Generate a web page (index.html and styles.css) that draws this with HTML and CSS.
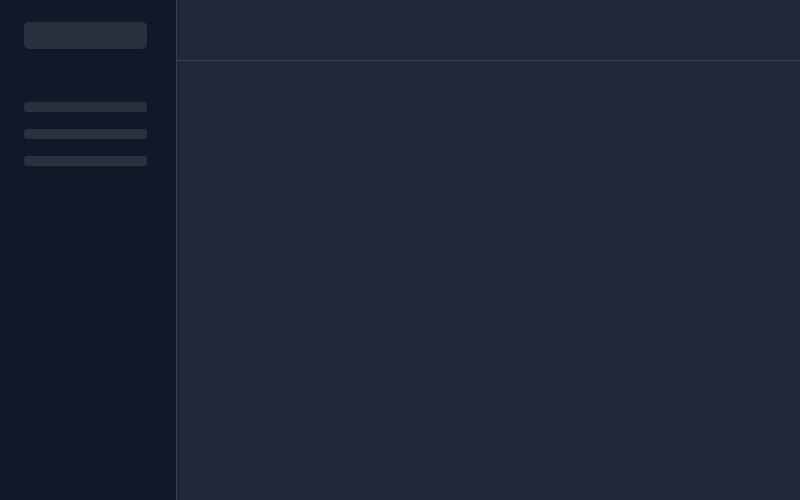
FILE: index.html
```html
<!DOCTYPE html>
<html>
<head>
<meta charset="utf-8">
<link rel="stylesheet" href="styles.css">
</head>
<body>
<div class="app">
  <aside class="sidebar">
    <div class="logo"></div>
    <nav class="nav">
      <div class="nav-item"></div>
      <div class="nav-item"></div>
      <div class="nav-item"></div>
    </nav>
  </aside>
  <main class="main">
    <header class="header"></header>
    <section class="content"></section>
  </main>
</div>
</body>
</html>
```
FILE: styles.css
```css
html, body {
  margin: 0;
  padding: 0;
  height: 100%;
  font-family: "Inter", "Liberation Sans", sans-serif;
  background: #1f2937;
}
.app {
  display: flex;
  height: 500px;
  width: 800px;
}
.sidebar {
  flex: none;
  background: #111827;
  border-right: 1px solid #374151;
  padding: 22px 24px;
  box-sizing: content-box;
  width: 128px;
  display: flex;
  flex-direction: column;
}
.logo {
  width: 123px;
  height: 27px;
  border-radius: 5px;
  background: #2a303d;
}
.nav {
  margin-top: 53px;
  display: flex;
  flex-direction: column;
  gap: 17px;
}
.nav-item {
  width: 123px;
  height: 10px;
  border-radius: 3px;
  background: #2a303d;
}
.main {
  flex: 1;
  display: flex;
  flex-direction: column;
  background: #1f2937;
}
.header {
  height: 60px;
  border-bottom: 1px solid #374151;
}
.content {
  flex: 1;
}
```
